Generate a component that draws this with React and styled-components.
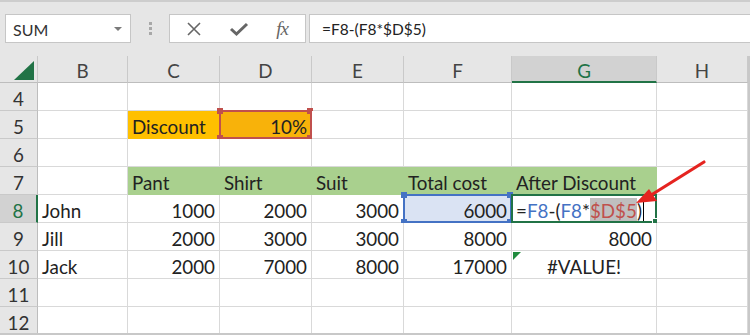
import styled, { createGlobalStyle } from 'styled-components';

const GlobalStyle = createGlobalStyle`
  html, body {
    margin: 0;
    padding: 0;
    background: #ffffff;
    overflow: hidden;
  }
  body {
    font-family: 'Lato', 'Open Sans', sans-serif;
  }
`;

const COLS = ['B', 'C', 'D', 'E', 'F', 'G', 'H'];
const WIDTHS = [38, 90, 92, 92, 92, 108, 145, 91];

const GREEN = '#a9d08e';
const BLUE = '#4472c4';
const RED = '#c0504d';

const rows = [
  { n: 4, cells: {} },
  {
    n: 5,
    cells: {
      C: { text: 'Discount', bg: '#ffc000' },
      D: { text: '10%', align: 'right', bg: '#f8b20a', sel: 'red' },
    },
  },
  { n: 6, cells: {} },
  {
    n: 7,
    cells: {
      C: { text: 'Pant', bg: GREEN },
      D: { text: 'Shirt', bg: GREEN },
      E: { text: 'Suit', bg: GREEN },
      F: { text: 'Total cost', bg: GREEN },
      G: { text: 'After Discount', bg: GREEN },
    },
  },
  {
    n: 8,
    active: true,
    cells: {
      B: { text: 'John' },
      C: { text: '1000', align: 'right' },
      D: { text: '2000', align: 'right' },
      E: { text: '3000', align: 'right' },
      F: { text: '6000', align: 'right', bg: '#dae3f3', sel: 'blue' },
      G: { formula: true, sel: 'green' },
    },
  },
  {
    n: 9,
    cells: {
      B: { text: 'Jill' },
      C: { text: '2000', align: 'right' },
      D: { text: '3000', align: 'right' },
      E: { text: '3000', align: 'right' },
      F: { text: '8000', align: 'right' },
      G: { text: '8000', align: 'right' },
    },
  },
  {
    n: 10,
    cells: {
      B: { text: 'Jack' },
      C: { text: '2000', align: 'right' },
      D: { text: '7000', align: 'right' },
      E: { text: '8000', align: 'right' },
      F: { text: '17000', align: 'right' },
      G: { text: '#VALUE!', align: 'center', error: true },
    },
  },
  { n: 11, cells: {} },
  { n: 12, cells: {} },
];

export default function App() {
  return (
    <>
      <GlobalStyle />
      <Window>
        <FormulaBar>
          <NameBox>
            <span>SUM</span>
            <Caret />
          </NameBox>
          <Grip>
            <i />
            <i />
            <i />
          </Grip>
          <FxBox>
            <svg width="16" height="16" viewBox="0 0 16 16">
              <path d="M2 2 L14 14 M14 2 L2 14" stroke="#666" strokeWidth="1.6" fill="none" />
            </svg>
            <svg width="20" height="16" viewBox="0 0 20 16">
              <path d="M2 8 L7.5 13 L18 3" stroke="#666" strokeWidth="3" fill="none" strokeLinejoin="miter" />
            </svg>
            <FxText>fx</FxText>
          </FxBox>
          <FormulaInput>=F8-(F8*$D$5)</FormulaInput>
        </FormulaBar>

        <Sheet>
          <Grid>
            <Corner>
              <svg width="20" height="19" viewBox="0 0 20 19">
                <polygon points="0,19 20,19 20,0" fill="#217346" />
              </svg>
            </Corner>
            {COLS.map((c) => (
              <ColHead key={c} $active={c === 'G'}>{c}</ColHead>
            ))}
            <HeadFiller />

            {rows.map((r) => (
              <Row key={r.n} r={r} />
            ))}
          </Grid>
          <Arrow width="120" height="70" viewBox="0 0 120 70">
            <line x1="110" y1="6" x2="54" y2="41" stroke="#e52420" strokeWidth="3.2" strokeLinecap="round" />
            <polygon points="42,47 55,33 63,45" fill="#e52420" />
          </Arrow>
        </Sheet>
      </Window>
    </>
  );
}

function Row({ r }) {
  return (
    <>
      <RowHead $active={r.active}>{r.n}</RowHead>
      {COLS.map((c) => {
        const cell = r.cells[c] || {};
        return (
          <Cell key={c} $bg={cell.bg} $align={cell.align}>
            {cell.formula ? <Formula /> : cell.text}
            {cell.sel && <Selection $kind={cell.sel} />}
            {cell.error && <ErrorMark />}
          </Cell>
        );
      })}
      <Cell />
    </>
  );
}

function Formula() {
  return (
    <span>
      =<Ref $c={BLUE}>F8</Ref>-(<Ref $c={BLUE}>F8</Ref>*<Hl>$D$5</Hl>)<Cursor />
    </span>
  );
}

const Window = styled.div`
  width: 750px;
  height: 335px;
  background: #e6e6e6;
  display: flex;
  flex-direction: column;
  overflow: hidden;
  color: #222;
`;

const FormulaBar = styled.div`
  height: 56px;
  flex-shrink: 0;
  box-sizing: border-box;
  border-top: 2px solid #cdcdcd;
  padding: 12px 0 13px 5px;
  display: flex;
  align-items: stretch;
`;

const NameBox = styled.div`
  width: 126px;
  box-sizing: border-box;
  background: #fff;
  border: 1px solid #c6c6c6;
  display: flex;
  align-items: center;
  justify-content: space-between;
  padding: 1px 8px 0 7px;
  font-size: 16px;
  color: #333;
`;

const Caret = styled.span`
  width: 0;
  height: 0;
  border-left: 4px solid transparent;
  border-right: 4px solid transparent;
  border-top: 4px solid #7a7a7a;
`;

const Grip = styled.div`
  width: 38px;
  display: flex;
  flex-direction: column;
  align-items: center;
  justify-content: center;
  gap: 2px;

  i {
    width: 3px;
    height: 3px;
    background: #a8a8a8;
  }
`;

const FxBox = styled.div`
  width: 137px;
  box-sizing: border-box;
  background: #fff;
  border: 1px solid #c6c6c6;
  display: flex;
  align-items: center;
  justify-content: space-between;
  padding: 0 17px 0 16px;
`;

const FxText = styled.span`
  font-family: 'Liberation Serif', serif;
  font-style: italic;
  font-size: 19px;
  color: #666;
  letter-spacing: -1px;
`;

const FormulaInput = styled.div`
  flex: 1;
  margin-left: 3px;
  background: #fff;
  border: 1px solid #c6c6c6;
  border-right: none;
  display: flex;
  align-items: center;
  padding: 1px 0 0 12px;
  font-size: 15.5px;
  color: #222;
`;

const Sheet = styled.div`
  position: relative;
  flex: 1;
  background: #fff;
`;

const Grid = styled.div`
  display: grid;
  grid-template-columns: ${WIDTHS.map((w) => w + 'px').join(' ')} 1fr;
  grid-template-rows: 27px repeat(9, 28px);
  height: 277px;
  overflow: hidden;
  border-bottom: 2px solid #c8c8c8;
  border-right: 2px solid #c8c8c8;
  width: 748px;
  box-sizing: content-box;
  font-size: 18.8px;
`;

const Corner = styled.div`
  background: #e6e6e6;
  border-right: 1px solid #c9c9c9;
  border-bottom: 1px solid #bdbdbd;
  display: flex;
  align-items: flex-end;
  justify-content: flex-end;
  padding: 0 3px 2px 0;
`;

const ColHead = styled.div`
  background: ${(p) => (p.$active ? '#d2d2d2' : '#e6e6e6')};
  color: ${(p) => (p.$active ? '#217346' : '#444')};
  border-right: 1px solid #c9c9c9;
  border-bottom: ${(p) => (p.$active ? '2px solid #217346' : '1px solid #bdbdbd')};
  display: flex;
  align-items: center;
  justify-content: center;
  padding-top: 3px;
`;

const HeadFiller = styled.div`
  background: #e6e6e6;
  border-bottom: 1px solid #bdbdbd;
`;

const RowHead = styled.div`
  background: ${(p) => (p.$active ? '#d2d2d2' : '#e6e6e6')};
  color: ${(p) => (p.$active ? '#217346' : '#333')};
  border-right: ${(p) => (p.$active ? '2px solid #217346' : '1px solid #bdbdbd')};
  border-bottom: 1px solid #c9c9c9;
  display: flex;
  align-items: center;
  justify-content: center;
  padding-top: 4px;
`;

const Cell = styled.div`
  position: relative;
  background: ${(p) => p.$bg || '#fff'};
  border-right: 1px solid ${(p) => p.$bg || '#d9d9d9'};
  border-bottom: 1px solid ${(p) => p.$bg || '#d9d9d9'};
  display: flex;
  align-items: center;
  justify-content: ${(p) =>
    p.$align === 'right' ? 'flex-end' : p.$align === 'center' ? 'center' : 'flex-start'};
  padding: 4px 4px 0 4px;
  white-space: nowrap;
  color: #222;
`;

const SEL = {
  red: { color: RED, width: 2 },
  blue: { color: BLUE, width: 2 },
  green: { color: '#217346', width: 2 },
};

const Selection = styled.span`
  position: absolute;
  left: -1px;
  top: -1px;
  right: -1px;
  bottom: -1px;
  border: ${(p) => SEL[p.$kind].width}px solid ${(p) => SEL[p.$kind].color};
  pointer-events: none;

  &::before,
  &::after {
    content: '';
    position: absolute;
    width: 6px;
    height: 6px;
    background: ${(p) => SEL[p.$kind].color};
  }

  &::before {
    left: -4px;
    top: -4px;
    display: ${(p) => (p.$kind === 'green' ? 'none' : 'block')};
    box-shadow: ${(p) => {
      const c = SEL[p.$kind].color;
      const w = p.$kind === 'red' ? 92 : 108;
      return `${w - 2}px 0 0 ${c}, 0 27px 0 ${c}, ${w - 2}px 27px 0 ${c}`;
    }};
  }

  &::after {
    right: -4px;
    bottom: -4px;
    display: ${(p) => (p.$kind === 'green' ? 'block' : 'none')};
    width: 5px;
    height: 5px;
    border: 1px solid #fff;
  }
`;

const ErrorMark = styled.span`
  position: absolute;
  left: 1px;
  top: 1px;
  width: 0;
  height: 0;
  border-top: 8px solid #1f8a3d;
  border-right: 8px solid transparent;
`;

const Ref = styled.span`
  color: ${(p) => p.$c};
`;

const Hl = styled.span`
  color: ${RED};
  background: #bfbfbf;
  padding: 1px 0 2px;
`;

const Cursor = styled.span`
  display: inline-block;
  width: 1px;
  height: 20px;
  background: #000;
  margin-left: 1px;
  vertical-align: -4px;
`;

const Arrow = styled.svg`
  position: absolute;
  left: 594px;
  top: 100px;
  pointer-events: none;
`;
